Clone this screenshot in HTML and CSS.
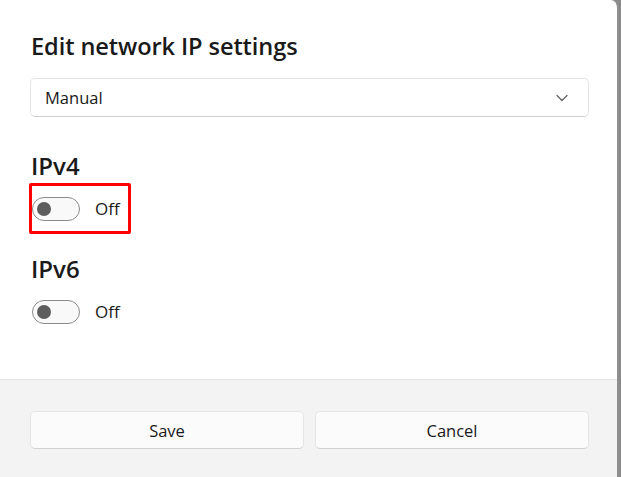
FILE: index.html
```html
<!DOCTYPE html>
<html>
<head>
<meta charset="utf-8">
<link rel="stylesheet" href="styles.css">
</head>
<body>
<div class="dialog">
  <div class="content">
    <h1 class="title">Edit network IP settings</h1>
    <div class="select">
      <span class="select-text">Manual</span>
      <svg class="chevron" width="12" height="8" viewBox="0 0 12 8"><path d="M1 1.5 L6 6.5 L11 1.5" fill="none" stroke="#5f5f5f" stroke-width="1.2" stroke-linecap="round" stroke-linejoin="round"/></svg>
    </div>
    <div class="section">
      <h2 class="section-title">IPv4</h2>
      <div class="toggle-row highlight">
        <span class="toggle"><span class="knob"></span></span>
        <span class="toggle-label">Off</span>
      </div>
    </div>
    <div class="section">
      <h2 class="section-title">IPv6</h2>
      <div class="toggle-row">
        <span class="toggle"><span class="knob"></span></span>
        <span class="toggle-label">Off</span>
      </div>
    </div>
  </div>
  <div class="footer">
    <button class="btn">Save</button>
    <button class="btn">Cancel</button>
  </div>
</div>
</body>
</html>
```

FILE: styles.css
```css
html, body {
  margin: 0;
  padding: 0;
  background: #8a8a8a;
}
body {
  width: 621px;
  height: 477px;
  overflow: hidden;
  font-family: "Open Sans", "Noto Sans", sans-serif;
  color: #1a1a1a;
}
.dialog {
  width: 619px;
  height: 490px;
  background: #ffffff;
  border-right: 2px solid #8f8f8f;
  border-top-right-radius: 8px;
  display: flex;
  flex-direction: column;
  box-sizing: border-box;
}
.content {
  padding: 30px 28px 0 30px;
  flex: 0 0 auto;
  height: 379px;
  box-sizing: border-box;
}
.title {
  margin: 0 0 0 1px;
  font-size: 23.6px;
  font-weight: 600;
  line-height: 32px;
  letter-spacing: -0.1px;
}
.select {
  margin-top: 16px;
  height: 39px;
  border: 1px solid #e5e5e5;
  border-bottom-color: #d0d0d0;
  border-radius: 5px;
  display: flex;
  align-items: center;
  justify-content: space-between;
  padding: 0 20px 0 14px;
  box-sizing: border-box;
}
.select-text {
  font-size: 16.5px;
}
.chevron {
  display: block;
}
.section {
  margin-top: 34px;
}
.section + .section {
  margin-top: 20px;
}
.section-title {
  margin: 0 0 2px 1px;
  font-size: 24px;
  font-weight: 600;
  line-height: 30px;
}
.toggle-row {
  display: inline-flex;
  align-items: center;
  gap: 15px;
  height: 51px;
  padding: 0 8px 0 0;
  box-sizing: border-box;
  border: 3px solid transparent;
  margin-left: -1px;
  border-radius: 2px;
}
.toggle-row.highlight {
  border-color: #ff0000;
}
.toggle {
  width: 48px;
  height: 24px;
  border: 1px solid #8a8a8a;
  border-radius: 12px;
  background: #f9f9f9;
  box-sizing: border-box;
  display: flex;
  align-items: center;
  padding-left: 4px;
}
.knob {
  width: 14px;
  height: 14px;
  border-radius: 50%;
  background: #5d5d5d;
}
.toggle-label {
  font-size: 17px;
}
.footer {
  flex: 1;
  background: #f3f3f3;
  border-top: 1px solid #e5e5e5;
  display: grid;
  grid-template-columns: 1fr 1fr;
  column-gap: 11px;
  padding: 31px 28px 0 30px;
  align-content: start;
}
.btn {
  height: 38px;
  border: 1px solid #e5e5e5;
  border-bottom-color: #d2d2d2;
  border-radius: 5px;
  background: #fbfbfb;
  font-family: "Open Sans", "Noto Sans", sans-serif;
  font-size: 16.5px;
  color: #1a1a1a;
}
```
